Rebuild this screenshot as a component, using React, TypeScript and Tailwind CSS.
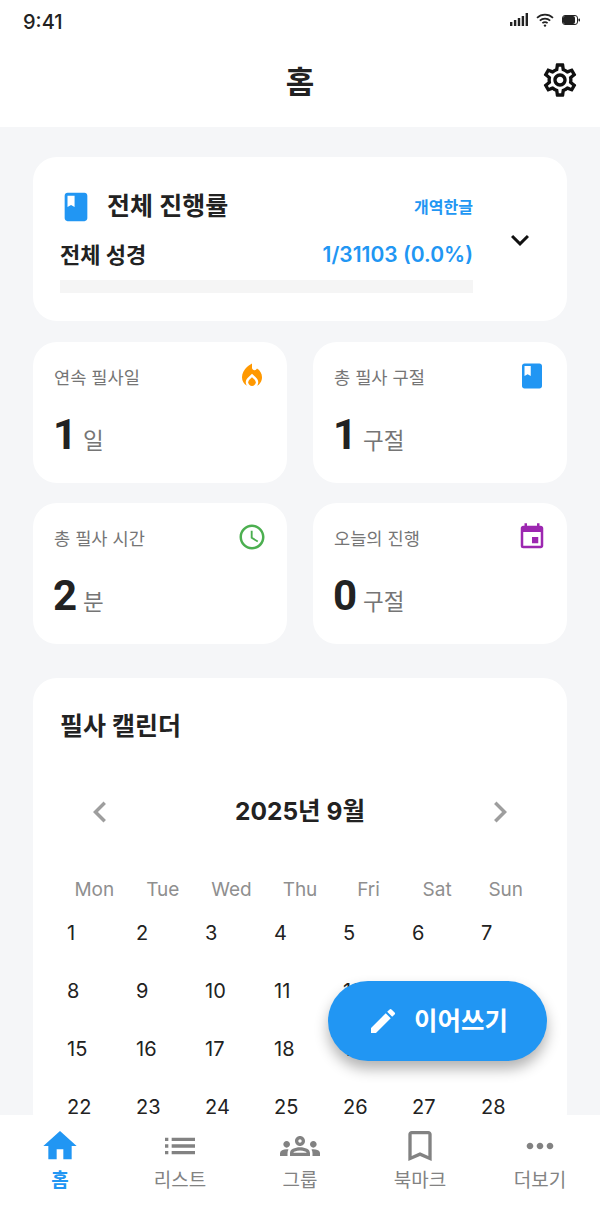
import { MdOutlineSettings, MdBook, MdKeyboardArrowDown, MdLocalFireDepartment, MdAccessTime, MdEvent, MdChevronLeft, MdChevronRight, MdEdit, MdHome, MdList, MdOutlineGroups, MdBookmarkBorder, MdMoreHoriz } from "react-icons/md";
import type { IconType } from "react-icons";

const sans = "font-['Inter','Noto_Sans_CJK_KR',sans-serif]";

const stats: { label: string; value: number; unit: string; Icon: IconType; color: string }[] = [
  { label: "연속 필사일", value: 1, unit: "일", Icon: MdLocalFireDepartment, color: "text-[#ff9800]" },
  { label: "총 필사 구절", value: 1, unit: "구절", Icon: MdBook, color: "text-[#2196f3]" },
  { label: "총 필사 시간", value: 2, unit: "분", Icon: MdAccessTime, color: "text-[#4caf50]" },
  { label: "오늘의 진행", value: 0, unit: "구절", Icon: MdEvent, color: "text-[#9c27b0]" },
];

const weekdays = ["Mon", "Tue", "Wed", "Thu", "Fri", "Sat", "Sun"];
const days = Array.from({ length: 28 }, (_, i) => i + 1);

const tabs: { label: string; Icon: IconType; active?: boolean }[] = [
  { label: "홈", Icon: MdHome, active: true },
  { label: "리스트", Icon: MdList },
  { label: "그룹", Icon: MdOutlineGroups },
  { label: "북마크", Icon: MdBookmarkBorder },
  { label: "더보기", Icon: MdMoreHoriz },
];

function StatusIcons() {
  return (
    <div className="mb-[4px] flex items-center gap-[7px] text-[#222]">
      <svg width="18" height="14" viewBox="0 0 18 14" fill="currentColor">
        <rect x="0" y="9" width="2.4" height="4" />
        <rect x="3.9" y="7" width="2.4" height="6" />
        <rect x="7.8" y="5" width="2.4" height="8" />
        <rect x="11.7" y="3" width="2.4" height="10" />
        <rect x="15.6" y="0" width="2.4" height="13" />
      </svg>
      <svg width="18" height="14" viewBox="0 0 18 14" fill="none" stroke="currentColor" strokeWidth="1.7" className="ml-[1px]">
        <path d="M1 4.8C5.6.6 12.4.6 17 4.8" />
        <path d="M3.8 7.6c3-2.7 7.4-2.7 10.4 0" />
        <path d="M6.4 10.2c1.5-1.3 3.7-1.3 5.2 0" />
        <circle cx="9" cy="12.6" r="1.2" fill="currentColor" stroke="none" />
      </svg>
      <svg width="18" height="12" viewBox="0 0 18 12" fill="none" className="ml-[1px]">
        <rect x="0.5" y="1.5" width="15" height="9" rx="2.5" stroke="currentColor" />
        <rect x="1" y="2" width="12" height="8" rx="2" fill="currentColor" />
        <rect x="16.5" y="4.5" width="1.5" height="3" rx="0.7" fill="currentColor" />
      </svg>
    </div>
  );
}

export default function App() {
  return (
    <div className={`relative flex h-[1208px] w-[600px] flex-col overflow-hidden bg-[#f5f6f8] ${sans}`}>
      <div className="bg-white">
        <div className="flex h-[44px] items-center justify-between pl-[23px] pr-[20px]">
          <span className="text-[20px] font-medium text-[#222]">9:41</span>
          <StatusIcons />
        </div>
        <div className="relative flex h-[83px] items-center justify-center pb-[6px]">
          <h1 className="text-[31px] font-bold text-[#222]">홈</h1>
          <MdOutlineSettings className="absolute right-[20px] top-[16px] text-[#111]" size={40} />
        </div>
      </div>

      <main className="min-h-0 flex-1 overflow-hidden px-[33px] pt-[30px]">
        <section className="flex h-[164px] items-center rounded-[24px] bg-white pl-[27px] pr-[29px]">
          <div className="flex-1 self-start pt-[31px]">
            <div className="flex items-center justify-between">
              <div className="flex items-center gap-[14px]">
                <MdBook className="ml-[-1px] text-[#2196f3]" size={34} />
                <span className="text-[25px] font-semibold text-[#222]">전체 진행률</span>
              </div>
              <span className="text-[16px] font-semibold text-[#2196f3]">개역한글</span>
            </div>
            <div className="mt-[13px] flex items-center justify-between">
              <span className="text-[22px] font-bold text-[#222]">전체 성경</span>
              <span className="text-[21px] font-semibold text-[#2196f3]">1/31103 (0.0%)</span>
            </div>
            <div className="mt-[8px] h-[13px] bg-[#f5f5f5]" />
          </div>
          <MdKeyboardArrowDown className="ml-[29px] mt-[2px] text-[#111]" size={36} />
        </section>

        <section className="mt-[21px] grid grid-cols-2 gap-x-[26px] gap-y-[20px]">
          {stats.map((s) => (
            <div key={s.label} className="h-[141px] rounded-[24px] bg-white pl-[21px] pr-[20px] pt-[19px]">
              <div className="flex items-center justify-between">
                <span className="mt-[4px] text-[17.6px] text-[#757575]">{s.label}</span>
                <s.Icon className={s.color} size={30} />
              </div>
              <div className="mt-[12px] flex items-baseline gap-[6px]">
                <span className="ml-[-1px] font-['Roboto','Noto_Sans_CJK_KR',sans-serif] text-[42px] font-bold text-[#222]">{s.value}</span>
                <span className="text-[22.5px] text-[#757575]">{s.unit}</span>
              </div>
            </div>
          ))}
        </section>

        <section className="mt-[34px] rounded-[24px] bg-white px-[27px] pt-[30px]">
          <h2 className="text-[25px] font-bold text-[#222]">필사 캘린더</h2>
          <div className="mt-[45px] flex items-center justify-between px-[19px]">
            <MdChevronLeft className="text-[#9e9e9e]" size={42} />
            <span className="text-[24.5px] font-bold text-[#222]">2025년 9월</span>
            <MdChevronRight className="text-[#9e9e9e]" size={42} />
          </div>
          <div className="mt-[43px] grid grid-cols-7">
            {weekdays.map((d) => (
              <span key={d} className="text-center text-[19px] text-[#8f8f8f]">{d}</span>
            ))}
          </div>
          <div className="mr-[-3px] grid grid-cols-7">
            {days.map((d) => (
              <span key={d} className="flex h-[58px] items-center pl-[7px] text-[20px] text-[#222]">{d}</span>
            ))}
          </div>
        </section>
      </main>

      <nav className="flex h-[93px] bg-white">
        {tabs.map((t) => (
          <div key={t.label} className={`flex flex-1 flex-col items-center pt-[11px] ${t.active ? "text-[#2196f3]" : "text-[#828282]"}`}>
            <t.Icon size={40} />
            <span className={`mt-[1px] text-[19px] ${t.active ? "font-semibold" : ""}`}>{t.label}</span>
          </div>
        ))}
      </nav>

      <button className="absolute left-[328px] top-[981px] flex h-[80px] w-[219px] items-center justify-center gap-[15px] rounded-full bg-[#2196f3] text-white shadow-[0_8px_14px_rgba(0,0,0,0.3)]">
        <MdEdit size={32} />
        <span className="text-[25.5px] font-semibold">이어쓰기</span>
      </button>
    </div>
  );
}
